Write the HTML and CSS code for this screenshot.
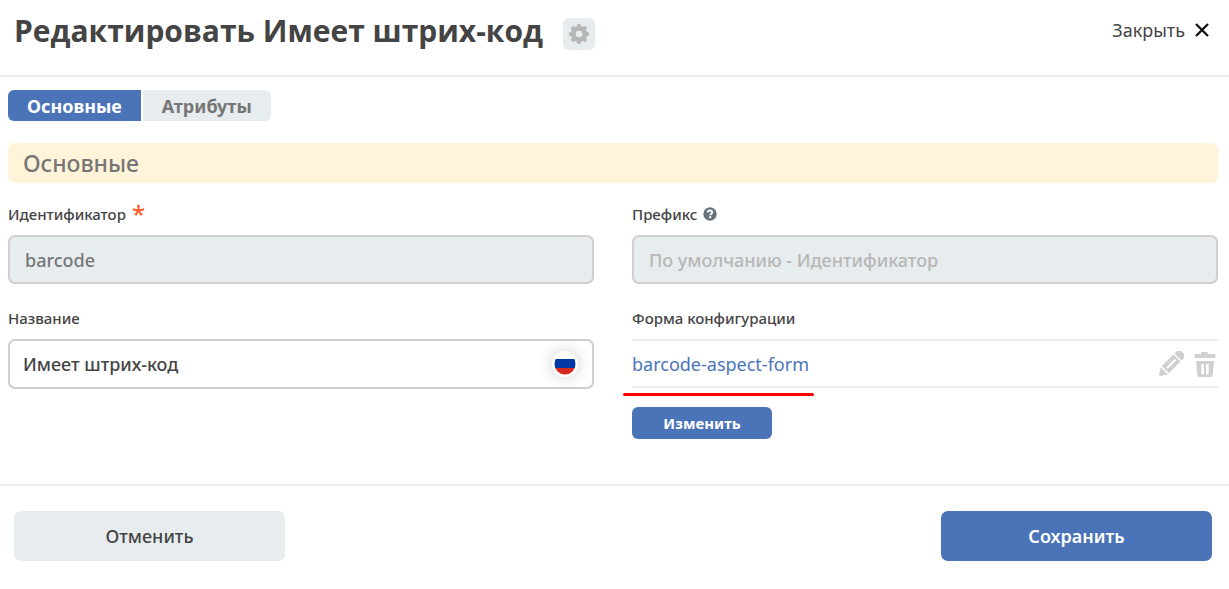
FILE: index.html
```html
<!DOCTYPE html>
<html lang="ru">
<head>
<meta charset="utf-8">
<title>Редактировать Имеет штрих-код</title>
<link rel="stylesheet" href="styles.css">
</head>
<body>
<form class="dialog">
  <header class="dialog-header">
    <h1 class="dialog-title">Редактировать Имеет штрих-код</h1>
    <button class="settings" type="button" aria-label="Настройки">
      <svg class="settings-icon" viewBox="0 0 20 20"><path fill="#b7b7b7" fill-rule="evenodd" d="M8.600 0h2.800l.8 2.300 1.500.6 2.200-1.100 2.300 2.300-1.100 2.200.6 1.500 2.300.8v2.800l-2.300.8-.6 1.500 1.100 2.200-2.300 2.300-2.200-1.100-1.500.6-.8 2.300H8.600l-.8-2.300-1.500-.6-2.200 1.100-2.300-2.300 1.100-2.200-.6-1.500L0 11.400V8.600l2.300-.8.6-1.500-1.100-2.200 2.300-2.300 2.200 1.100 1.500-.6zM10 6.700a3.300 3.300 0 1 0 0 6.600 3.300 3.300 0 0 0 0-6.600z"/></svg>
    </button>
    <button class="close" type="button">Закрыть
      <svg class="close-icon" viewBox="0 0 14 14"><path d="M1 1l12 12M13 1L1 13" stroke="#111" stroke-width="2.300"/></svg>
    </button>
  </header>
  <main class="dialog-body">
    <nav class="tabs">
      <button class="tab tab-active" type="button">Основные</button>
      <button class="tab" type="button">Атрибуты</button>
    </nav>
    <h2 class="section-title">Основные</h2>
    <div class="fields">
      <div class="field">
        <label class="label" for="ident">Идентификатор <span class="required">*</span></label>
        <input class="input input-disabled" id="ident" value="barcode" disabled>
      </div>
      <div class="field">
        <label class="label" for="prefix">Префикс
          <svg class="help-icon" viewBox="0 0 14 14"><circle cx="7" cy="7" r="6.700" fill="#68737d"/><path d="M4.800 5.500C4.900 4 5.800 3.500 7 3.500s2.200.7 2.200 1.900C9.200 6.900 7.200 6.900 7.200 8.300" fill="none" stroke="#fff" stroke-width="1.800"/><rect x="6.200" y="9.200" width="2" height="2" fill="#fff"/></svg>
        </label>
        <input class="input input-disabled" id="prefix" placeholder="По умолчанию - Идентификатор" disabled>
      </div>
      <div class="field">
        <label class="label" for="name">Название</label>
        <div class="localized">
          <input class="input input-localized" id="name" value="Имеет штрих-код">
          <button class="flag" type="button" aria-label="Русский">
            <svg class="flag-icon" viewBox="0 0 26 26"><defs><clipPath id="disc"><circle cx="13" cy="13" r="10.500"/></clipPath></defs><circle cx="13" cy="13" r="12.500" fill="#fff"/><g clip-path="url(#disc)"><path fill="#0039a6" d="M0 8h26v9H0z"/><path fill="#d52b1e" d="M0 17h26v9H0z"/></g></svg>
          </button>
        </div>
      </div>
      <div class="field">
        <span class="label">Форма конфигурации</span>
        <div class="form-row">
          <a class="form-link" href="#form">barcode-aspect-form</a>
          <button class="row-action" type="button" aria-label="Редактировать">
            <svg class="row-icon" viewBox="0 0 26 26"><g fill="#d0d0d0" transform="rotate(45 13 13)"><path d="M8-1q0-2.500 2.500-2.500h5Q18-3.500 18-1v4H8zM8 4.500h4V21H8zM14 4.500h4V21h-4zM12 4.500h2v2.300h-2zM12 18.700h2V21h-2zM8 22.500h10l-3.600 6q-1.400 1.500-2.800 0z"/></g></svg>
          </button>
          <button class="row-action" type="button" aria-label="Удалить">
            <svg class="row-icon" viewBox="0 0 26 26"><path fill="#d0d0d0" fill-rule="evenodd" d="M3.500 3H9V2q0-1 1-1h5q1 0 1 1v1h6.500q1 0 1 1v3h-21V4q0-1 1-1zM4 10h18l-1.300 14.200q-.2 1.800-2 1.800H7.300q-1.800 0-2-1.800zM9.300 13v10.300H12V13zM14 13v10.300h2.700V13z"/></svg>
          </button>
          <span class="marker"></span>
        </div>
        <button class="change" type="button">Изменить</button>
      </div>
    </div>
  </main>
  <footer class="dialog-footer">
    <button class="action" type="button">Отменить</button>
    <button class="action action-primary" type="submit">Сохранить</button>
  </footer>
</form>
</body>
</html>
```
FILE: styles.css
```css
* { box-sizing: border-box; }
body {
  margin: 0;
  background: #fff;
  color: #444;
  font-family: "Noto Sans", "Open Sans", sans-serif;
  font-size: 18px;
}
button, input { font: inherit; color: inherit; }
button { border: 0; padding: 0; background: none; cursor: pointer; }
svg { display: block; flex: none; }

.dialog-header {
  display: flex;
  align-items: center;
  padding: 9px 20px 16px 14px;
  border-bottom: 2px solid #e8edf0;
}
.dialog-title {
  margin: 0;
  font-family: "Open Sans", sans-serif;
  font-size: 30px;
  line-height: 44px;
  font-weight: 700;
  padding-bottom: 6px;
}
.settings {
  display: grid;
  place-items: center;
  width: 32px;
  height: 32px;
  margin-left: 20px;
  border-radius: 6px;
  background: #e7ecee;
}
.settings-icon { width: 20px; height: 20px; }
.close {
  display: flex;
  align-items: center;
  gap: 10px;
  margin-left: auto;
  padding-bottom: 8px;
}
.close-icon { width: 14px; height: 14px; }

.dialog-body { padding: 13px 11px 45px 8px; }
.tabs { display: flex; gap: 2px; }
.tab {
  height: 31px;
  padding: 0 19px;
  background: #e7ecee;
  color: #767676;
  font-weight: 700;
  border-radius: 0 6px 6px 0;
}
.tab-active {
  background: #4b74b8;
  color: #fff;
  border-radius: 6px 0 0 6px;
}
.section-title {
  margin: 22px 0 0;
  padding: 0 15px;
  border-radius: 7px;
  background: #fff4d9;
  color: #767676;
  font-size: 23px;
  line-height: 40px;
  font-weight: 500;
}
.fields {
  display: grid;
  grid-template-columns: 1fr 1fr;
  gap: 22px 38px;
  padding-top: 19px;
}
.field { min-width: 0; }
.label {
  display: flex;
  align-items: center;
  gap: 6px;
  height: 24px;
  margin-bottom: 9px;
  font-size: 15px;
  font-weight: 500;
}
.required { color: #ff5a28; font-size: 24px; line-height: 24px; }
.help-icon { width: 14px; height: 14px; }
.input {
  display: block;
  width: 100%;
  height: 49px;
  padding: 0 15px;
  border: 2px solid #cfcfcf;
  border-radius: 7px;
  background: #fff;
  color: #444;
  font-weight: 500;
}
.input-disabled { background: #e7ecee; color: #767676; }
.input::placeholder { color: #b7b7b7; opacity: 1; }
.localized { position: relative; }
.input-localized { height: 50px; padding: 0 50px 0 13px; }
.flag {
  position: absolute;
  right: 16px;
  top: 12px;
  border-radius: 50%;
  box-shadow: 0 0 16px #0003;
}
.flag-icon { width: 26px; height: 26px; }

.form-row {
  position: relative;
  display: flex;
  align-items: center;
  gap: 8px;
  height: 49px;
  border-top: 2px solid #e8edf0;
  border-bottom: 2px solid #e8edf0;
}
.form-link { flex: 1; color: #4b74b8; text-decoration: none; }
.row-icon { width: 26px; height: 26px; }
.marker {
  position: absolute;
  left: -9px;
  top: 52px;
  width: 191px;
  height: 3px;
  border-radius: 2px;
  background: #f00;
}
.change {
  width: 140px;
  height: 32px;
  margin-top: 19px;
  border-radius: 6px;
  background: #4b74b8;
  color: #fff;
  font-size: 15px;
  font-weight: 700;
}

.dialog-footer {
  display: flex;
  justify-content: space-between;
  padding: 25px 17px 28px 14px;
  border-top: 2px solid #e8edf0;
}
.action {
  width: 271px;
  height: 50px;
  border-radius: 7px;
  background: #e7ecee;
  font-weight: 500;
}
.action-primary { background: #4b74b8; color: #fff; font-weight: 600; }
```
